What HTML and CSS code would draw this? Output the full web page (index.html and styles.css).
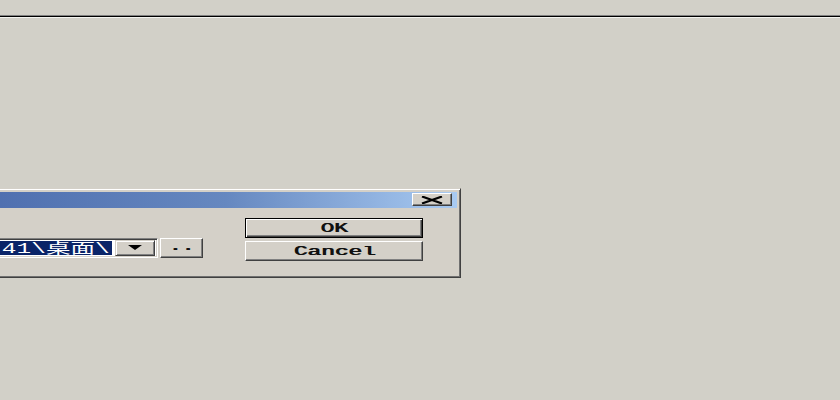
FILE: index.html
```html
<!DOCTYPE html>
<html lang="en">
<head>
    <meta charset="UTF-8">
    <title>Browse</title>
    <link rel="stylesheet" href="styles.css">
</head>
<body>
<div class="topline"></div>
<div class="window">
    <div class="titlebar">
        <div class="closebtn">
            <svg width="22" height="8" viewBox="0 0 22 8"><path d="M1 0.5 L21 7.5 M1 7.5 L21 0.5" stroke="#000" stroke-width="2.2"/></svg>
        </div>
    </div>
    <div class="content">
        <div class="pathrow">
            <div class="combo">
                <div class="combotext"><span class="sel"><span class="wide">41\桌面\</span></span></div>
                <div class="dropbtn">
                    <svg width="16" height="6" viewBox="0 0 16 6"><path d="M1 0 L15 0 L8 5 Z" fill="#000"/></svg>
                </div>
            </div>
            <div class="btn browse"><span class="wide">..</span></div>
        </div>
        <div class="buttons">
            <div class="btn default"><span class="wide">OK</span></div>
            <div class="btn"><span class="wide">Cancel</span></div>
        </div>
    </div>
</div>
</body>
</html>
```

FILE: styles.css
```css
body{
    margin: 0;
    background-color: #d2d0c8;
    width: 840px;
    height: 400px;
    overflow: hidden;
    font-family: "Liberation Mono", "Noto Sans CJK SC", monospace;
}
.topline{
    margin-top: 15px;
    height: 1px;
    background-color: #000000;
    border-top: 1px solid #808080;
    border-bottom: 1px solid #f4f4f0;
}
.window{
    position: absolute;
    left: -60px;
    top: 188px;
    width: 521px;
    height: 90px;
    box-sizing: border-box;
    padding: 3px;
    background-color: #d4d0c8;
    border: 1px solid #404040;
    border-top-color: #d4d0c8;
    border-left-color: #d4d0c8;
    box-shadow: inset 1px 1px #ffffff, inset -1px -1px #707070;
}
.titlebar{
    height: 16px;
    background: linear-gradient(to right, #4a6aac, #6688c0 55%, #a8caf2);
    display: flex;
    justify-content: flex-end;
    align-items: flex-start;
}
.closebtn{
    width: 40px;
    height: 13px;
    margin-top: 1px;
    margin-right: 5px;
    box-sizing: border-box;
    background-color: #d4d0c8;
    border-top: 1px solid #ffffff;
    border-left: 1px solid #ffffff;
    border-right: 1px solid #404040;
    border-bottom: 1px solid #404040;
    box-shadow: inset -1px -1px #808080;
    display: flex;
    align-items: center;
    justify-content: center;
}
.content{
    display: flex;
    padding-top: 10px;
}
.pathrow{
    display: flex;
    gap: 2px;
    margin-top: 20px;
    margin-left: 6px;
    margin-right: 42px;
}
.combo{
    width: 208px;
    height: 20px;
    box-sizing: border-box;
    display: flex;
    padding: 2px;
    background-color: #ffffff;
    border-top: 1px solid #808080;
    border-left: 1px solid #808080;
    border-right: 1px solid #ffffff;
    border-bottom: 1px solid #ffffff;
    box-shadow: inset 1px 1px #404040, inset -1px -1px #d4d0c8;
}
.combotext{
    flex: 1;
    display: flex;
    padding-right: 3px;
}
.sel{
    background-color: #0a2468;
    color: #ffffff;
    font-size: 14px;
    line-height: 16px;
    white-space: nowrap;
    width: 100%;
    display: flex;
    justify-content: flex-end;
}
.wide{
    display: inline-block;
    transform: scaleX(1.75);
    transform-origin: center;
    white-space: nowrap;
}
.sel .wide{
    transform-origin: right center;
    margin-right: 2px;
}
.dropbtn{
    width: 40px;
    height: 16px;
    margin-top: -1px;
    box-sizing: border-box;
    background-color: #d4d0c8;
    border-top: 1px solid #d4d0c8;
    border-left: 1px solid #d4d0c8;
    border-right: 1px solid #404040;
    border-bottom: 1px solid #404040;
    box-shadow: inset 1px 1px #ffffff, inset -1px -1px #808080;
    display: flex;
    align-items: center;
    justify-content: center;
}
.btn{
    width: 178px;
    height: 20px;
    box-sizing: border-box;
    background-color: #d4d0c8;
    border-top: 1px solid #ffffff;
    border-left: 1px solid #ffffff;
    border-right: 1px solid #404040;
    border-bottom: 1px solid #404040;
    box-shadow: inset -1px -1px #808080;
    font-size: 13px;
    color: #101010;
    text-shadow: 0.7px 0 #101010;
    display: flex;
    align-items: center;
    justify-content: center;
}
.browse{
    width: 43px;
    font-size: 12px;
    align-items: flex-end;
    padding-bottom: 3px;
}
.buttons{
    display: flex;
    flex-direction: column;
    gap: 3px;
}
.default{
    border: 1px solid #000000;
    box-shadow: inset 1px 1px #ffffff, inset -1px -1px #404040, inset -2px -2px #808080;
}
```
